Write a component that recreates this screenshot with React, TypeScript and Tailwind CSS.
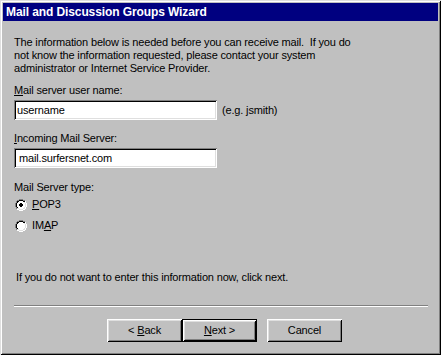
import React from 'react'

const RADIO = [
  '....gggg....',
  '..ggkkkkgg..',
  '.gkkwwwwkkh.',
  '.gkwwwwwwlh.',
  'gkwwwwwwwwlh',
  'gkwwwwwwwwlh',
  'gkwwwwwwwwlh',
  'gkwwwwwwwwlh',
  '.gkwwwwwwlh.',
  '.gllwwwwllh.',
  '..hhllllhh..',
  '....hhhh....',
]
const DOT = ['.kk.', 'kkkk', 'kkkk', '.kk.']
const COLORS: Record<string, string> = { g: '#808080', k: '#000000', w: '#ffffff', l: '#dfdfdf', h: '#ffffff' }

function Radio({ checked }: { checked?: boolean }) {
  const rects: React.ReactNode[] = []
  RADIO.forEach((row, y) =>
    row.split('').forEach((c, x) => {
      if (c !== '.') rects.push(<rect key={`${x}-${y}`} x={x} y={y} width={1} height={1} fill={COLORS[c]} />)
    }),
  )
  if (checked)
    DOT.forEach((row, y) =>
      row.split('').forEach((c, x) => {
        if (c !== '.') rects.push(<rect key={`d${x}-${y}`} x={x + 4} y={y + 4} width={1} height={1} fill="#000" />)
      }),
    )
  return (
    <svg width="12" height="12" viewBox="0 0 12 12" shapeRendering="crispEdges" className="shrink-0">
      {rects}
    </svg>
  )
}

function Field({ value, pad }: { value: string; pad: string }) {
  return (
    <div
      className={`w-[203px] h-[20px] bg-white flex items-center ${pad} shadow-[inset_1px_1px_#808080,inset_-1px_-1px_#ffffff,inset_2px_2px_#000000,inset_-2px_-2px_#dfdfdf]`}
    >
      {value}
    </div>
  )
}

function Button({ children, isDefault }: { children: React.ReactNode; isDefault?: boolean }) {
  return (
    <button
      className={`w-[75px] h-[23px] flex items-center justify-center bg-[#c0c0c0] ${
        isDefault
          ? 'border border-black shadow-[inset_1px_1px_#ffffff,inset_-1px_-1px_#000000,inset_2px_2px_#dfdfdf,inset_-2px_-2px_#808080]'
          : 'shadow-[inset_1px_1px_#ffffff,inset_-1px_-1px_#000000,inset_2px_2px_#dfdfdf,inset_-2px_-2px_#808080]'
      }`}
    >
      {children}
    </button>
  )
}

export default function App() {
  return (
    <div className="w-[441px] h-[355px] bg-[#c0c0c0] p-[3px] flex flex-col text-black text-[11px] leading-[13px] tracking-[-0.16px] font-['Liberation_Sans',Arial,sans-serif] shadow-[inset_1px_1px_#dfdfdf,inset_-1px_-1px_#000000,inset_2px_2px_#ffffff,inset_-2px_-2px_#808080]">
      <div className="h-[18px] bg-[#000080] text-white font-bold text-[12px] tracking-[-0.1px] flex items-center pl-[3px]">
        Mail and Discussion Groups Wizard
      </div>

      <div className="flex flex-col pl-[11px] pr-[10px]">
        <p className="mt-[15px]">
          The information below is needed before you can receive mail.&nbsp; If you do
          <br />
          not know the information requested, please contact your system
          <br />
          administrator or Internet Service Provider.
        </p>

        <div className="mt-[9px]">
          <span className="underline">M</span>ail server user name:
        </div>
        <div className="mt-[3px] flex items-center">
          <Field value="username" pad="pl-[3px]" />
          <span className="ml-[5px]">(e.g. jsmith)</span>
        </div>

        <div className="mt-[12px]">
          <span className="underline">I</span>ncoming Mail Server:
        </div>
        <div className="mt-[3px]">
          <Field value="mail.surfersnet.com" pad="pl-[5px]" />
        </div>

        <div className="mt-[13px]">Mail Server type:</div>
        <div className="mt-[4px] flex items-center h-[13px] pl-[1px]">
          <Radio checked />
          <span className="ml-[5px]">
            <span className="underline">P</span>OP3
          </span>
        </div>
        <div className="mt-[8px] flex items-center h-[13px] pl-[1px]">
          <Radio />
          <span className="ml-[5px]">
            IM<span className="underline">A</span>P
          </span>
        </div>

        <div className="mt-[39px] pl-[2px]">If you do not want to enter this information now, click next.</div>

        <div className="mt-[21px] h-[2px] border-t border-t-[#808080] border-b border-b-white" />

        <div className="mt-[12px] flex pl-[93px]">
          <Button>
            &lt; <span className="underline ml-[3px]">B</span>ack
          </Button>
          <Button isDefault>
            <span className="underline">N</span>ext &gt;
          </Button>
          <div className="ml-[10px]">
            <Button>Cancel</Button>
          </div>
        </div>
      </div>
    </div>
  )
}
